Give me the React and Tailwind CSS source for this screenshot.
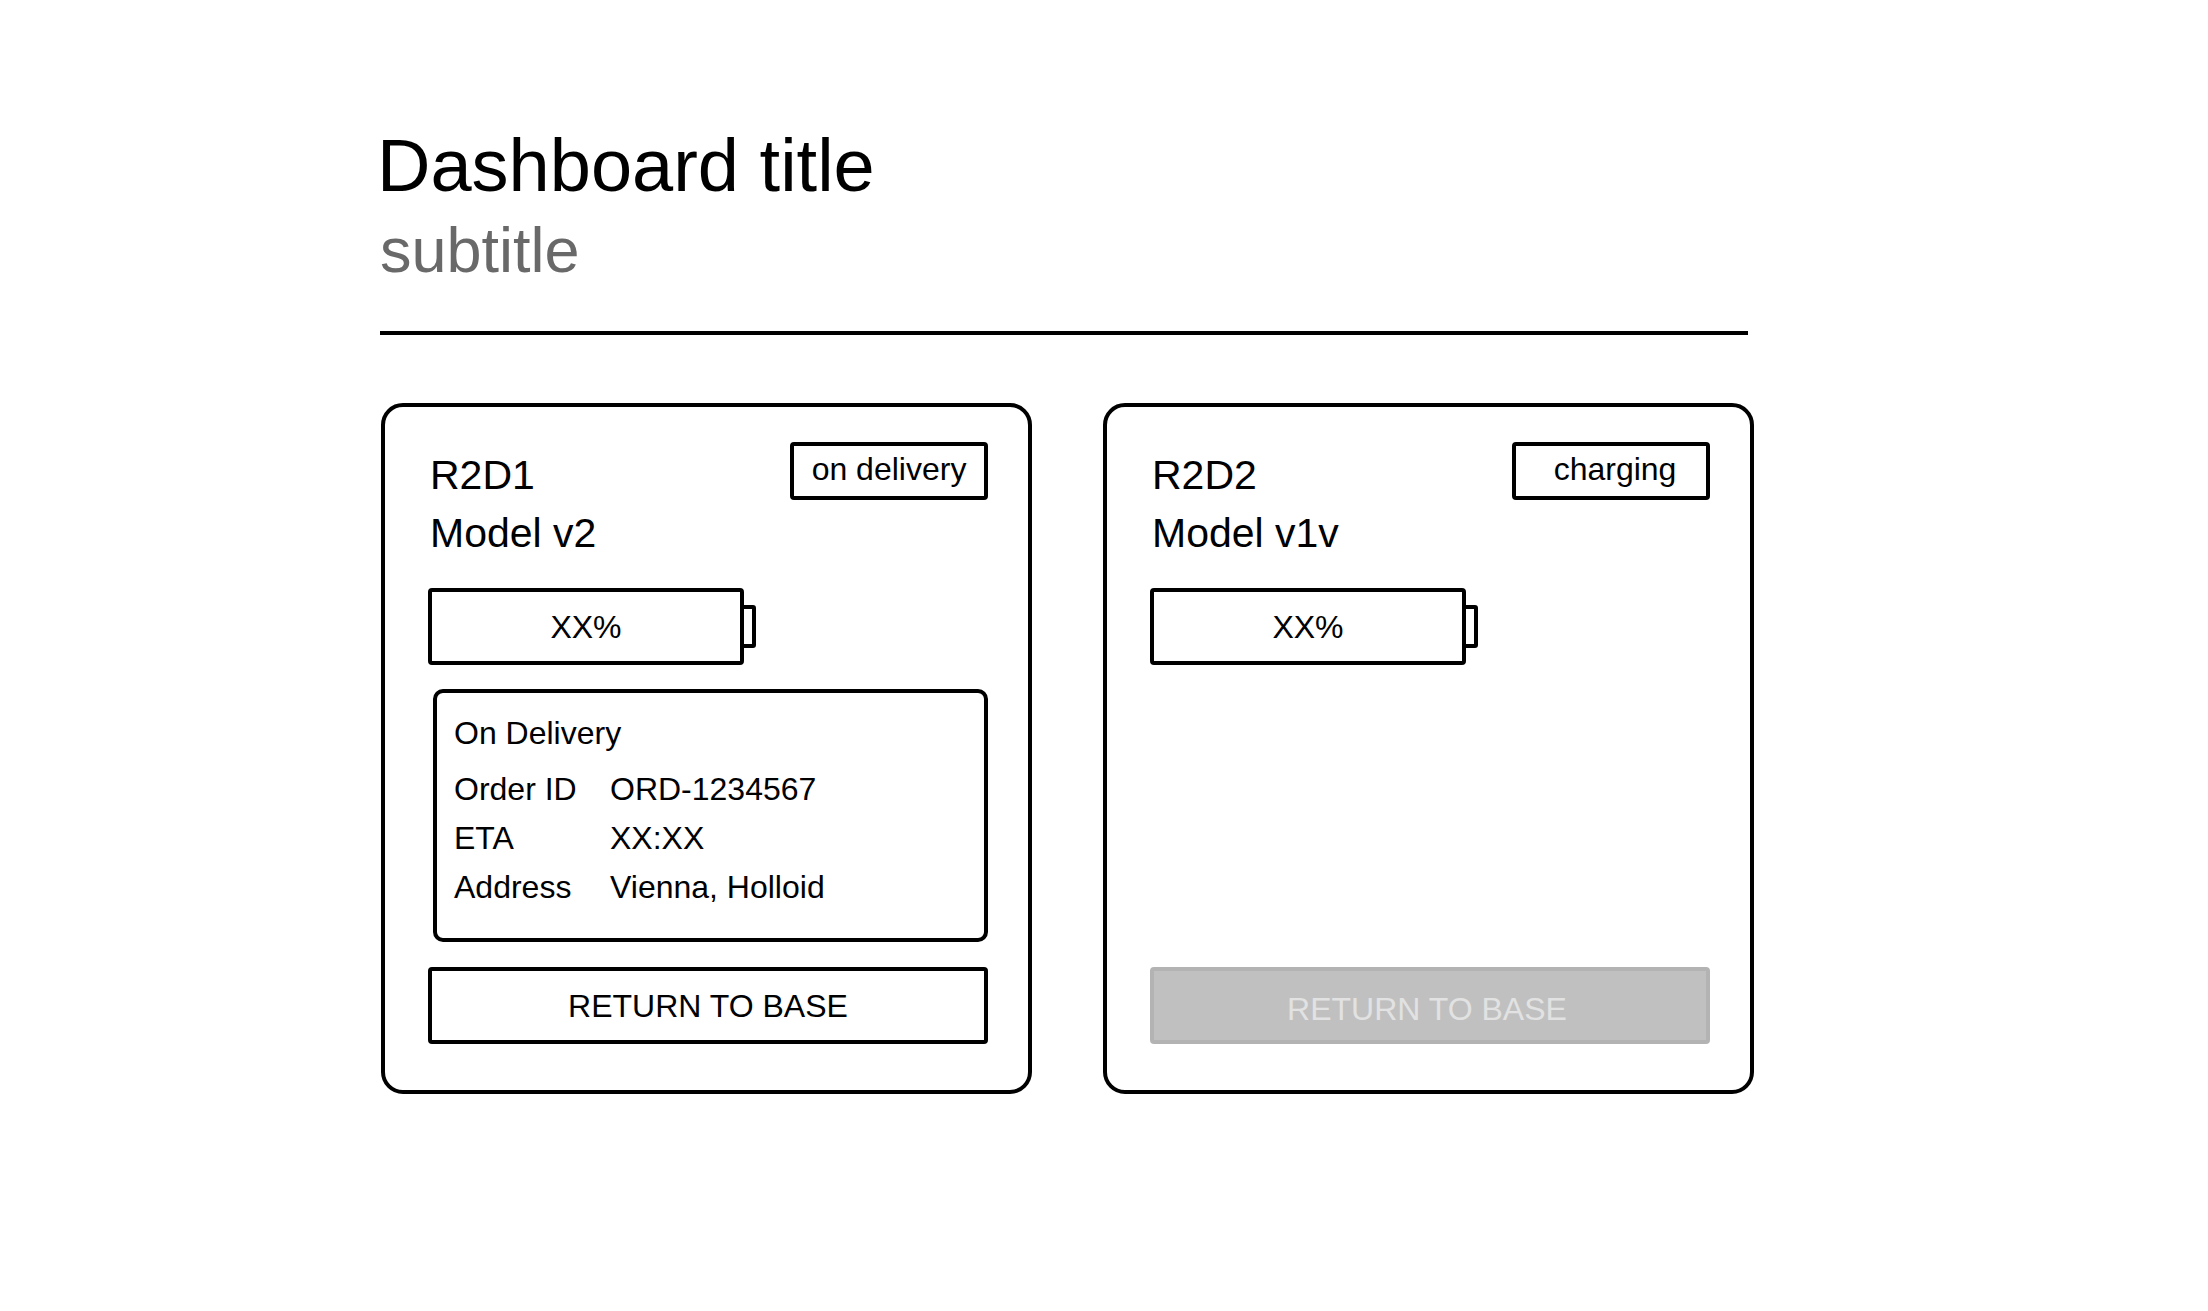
const robots = [
  {
    name: "R2D1",
    model: "Model v2",
    status: "on delivery",
    battery: "XX%",
    canReturn: true,
    delivery: [
      ["Order ID", "ORD-1234567"],
      ["ETA", "XX:XX"],
      ["Address", "Vienna, Holloid"],
    ],
  },
  {
    name: "R2D2",
    model: "Model v1v",
    status: "charging",
    battery: "XX%",
    canReturn: false,
    delivery: null,
  },
];

function Battery({ level }) {
  return (
    <div className="mt-[26px] flex items-center">
      <div className="flex h-[77px] w-[316px] items-center justify-center rounded-[4px] border-4 border-black">
        {level}
      </div>
      <div className="-ml-1 h-[43px] w-4 rounded-[3px] border-4 border-black" />
    </div>
  );
}

function DeliveryDetails({ rows }) {
  return (
    <section className="mt-6 ml-[5px] rounded-[10px] border-4 border-black px-[17px] pt-4 pb-[26px] leading-[49px]">
      <h3>On Delivery</h3>
      <dl className="mt-[7px] grid grid-cols-[156px_1fr]">
        {rows.map(([label, value]) => (
          <div key={label} className="contents">
            <dt>{label}</dt>
            <dd>{value}</dd>
          </div>
        ))}
      </dl>
    </section>
  );
}

function RobotCard({ robot }) {
  return (
    <article className="flex flex-col rounded-[22px] border-4 border-black pt-[35px] pr-10 pb-[46px] pl-[43px]">
      <div className="flex items-start justify-between">
        <div className="pt-1 pl-0.5 text-[41px] leading-[58px]">
          <h2>{robot.name}</h2>
          <p>{robot.model}</p>
        </div>
        <span
          className={
            "flex h-[58px] w-[198px] items-center justify-center rounded-[4px] border-4 border-black pb-1 " +
            (robot.status === "charging" ? "pl-2" : "")
          }
        >
          {robot.status}
        </span>
      </div>
      <Battery level={robot.battery} />
      {robot.delivery && <DeliveryDetails rows={robot.delivery} />}
      <div className="mt-auto pt-[25px]">
        <button
          type="button"
          disabled={!robot.canReturn}
          className="flex h-[77px] w-full items-center justify-center rounded-[4px] border-4 border-black disabled:border-[#b3b3b3] disabled:bg-[#c0c0c0] disabled:pt-1.5 disabled:pr-1.5 disabled:text-[#e2e2e2]"
        >
          RETURN TO BASE
        </button>
      </div>
    </article>
  );
}

export default function App() {
  return (
    <main className="min-h-screen bg-white pt-[121px] pr-[454px] pb-16 pl-[377px] font-['Liberation_Sans',Arial,sans-serif] text-[32px] leading-10 text-black">
      <h1 className="text-[74px] leading-[90px]">Dashboard title</h1>
      <p className="ml-[3px] text-[63px] leading-[78px] text-[#696969]">subtitle</p>
      <hr className="mt-[42px] mr-1.5 ml-[3px] border-0 border-t-4 border-black" />
      <div className="mt-[68px] ml-1 grid grid-cols-2 gap-[71px]">
        {robots.map((robot) => (
          <RobotCard key={robot.name} robot={robot} />
        ))}
      </div>
    </main>
  );
}
